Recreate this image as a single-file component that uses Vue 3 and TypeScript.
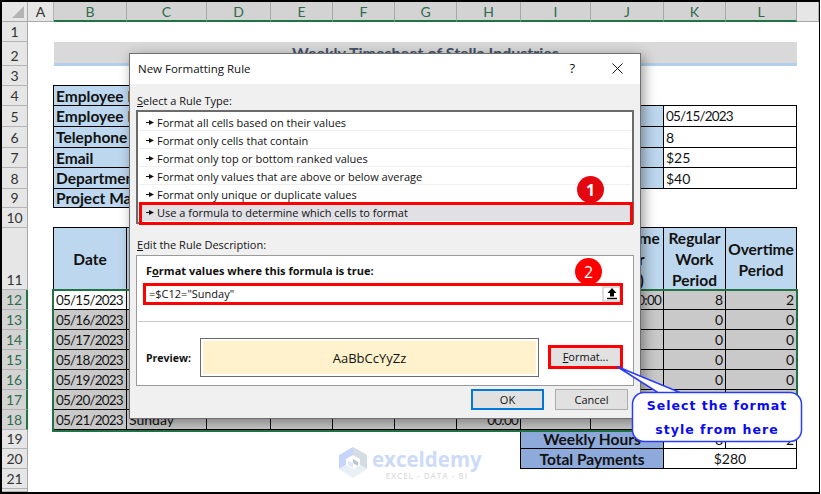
<script setup lang="ts">
interface Cell {
  c: number
  r: number
  cs?: number
  rs?: number
  t?: string
  k?: string
}

const colTracks = [26, 26, 73, 80, 64, 62, 62, 62, 64, 70, 73, 62, 71]
const rowTracks = [20, 20, 24, 20, 20, 21, 21, 20, 21, 19, 20, 62, 20, 20, 20, 20, 20, 20, 20, 19, 20, 20]
const gridStyle = {
  gridTemplateColumns: colTracks.map((n) => n + 'px').join(' ') + ' 1fr',
  gridTemplateRows: rowTracks.map((n) => n + 'px').join(' ') + ' 1fr',
}

const colLetters = ['A', 'B', 'C', 'D', 'E', 'F', 'G', 'H', 'I', 'J', 'K', 'L']
const rowNums = Array.from({ length: 21 }, (_, i) => i + 1)
const at = (c: number, r: number, cs = 1, rs = 1) => ({
  gridColumn: `${c} / span ${cs}`,
  gridRow: `${r} / span ${rs}`,
})

const cells: Cell[] = []
;['Employee Name', 'Employee ID', 'Telephone', 'Email', 'Department', 'Project Manager'].forEach((t, i) => {
  cells.push({ c: 3, r: 5 + i, cs: 3, t, k: 'blue bold' })
})
const infoRows: [string, string, string][] = [
  ['Start Date', '05/15/2023', 'date'],
  ['Regular Hours', '8', ''],
  ['Regular Rate', '$25', ''],
  ['Overtime Rate', '$40', ''],
]
infoRows.forEach(([a, b, k], i) => {
  cells.push({ c: 9, r: 6 + i, cs: 3, t: a, k: 'blue bold' })
  cells.push({ c: 12, r: 6 + i, cs: 2, t: b, k })
})
const heads = ['Date', 'Day', 'Entry', 'Lunch\nStart', 'Lunch\nEnd', 'Exit', 'Work\nHours', 'Regular\nHours', 'Overtime\nHour\n(hrs.)', 'Regular\nWork\nPeriod', 'Overtime\nPeriod']
heads.forEach((t, i) => cells.push({ c: 3 + i, r: 12, t, k: 'blue bold head' }))
const days = ['Monday', 'Tuesday', 'Wednesday', 'Thursday', 'Friday', 'Saturday', 'Sunday']
const dates = ['05/15/2023', '05/16/2023', '05/17/2023', '05/18/2023', '05/19/2023', '05/20/2023', '05/21/2023']
dates.forEach((d, i) => {
  const r = 13 + i
  cells.push({ c: 3, r, t: d, k: i === 0 ? 'date' : 'grey date' })
  cells.push({ c: 4, r, t: days[i], k: i === 0 ? '' : 'grey' })
  for (let c = 5; c <= 8; c++) cells.push({ c, r, k: 'grey' })
  cells.push({ c: 9, r, t: i === 6 ? '00:00' : '', k: 'grey right date' })
  cells.push({ c: 10, r, k: 'grey' })
  cells.push({ c: 11, r, t: i === 0 ? '10:00' : '', k: 'grey right date' })
  cells.push({ c: 12, r, t: i === 0 ? '8' : '0', k: 'grey right' })
  cells.push({ c: 13, r, t: i === 0 ? '2' : '0', k: 'grey right' })
})
cells.push({ c: 10, r: 20, cs: 2, t: 'Weekly Hours', k: 'deep bold center' })
cells.push({ c: 12, r: 20, t: '8', k: 'right' })
cells.push({ c: 13, r: 20, t: '2', k: 'right' })
cells.push({ c: 10, r: 21, cs: 2, t: 'Total Payments', k: 'deep bold center' })
cells.push({ c: 12, r: 21, cs: 2, t: '$280', k: 'center' })

const ruleTypes = [
  'Format all cells based on their values',
  'Format only cells that contain',
  'Format only top or bottom ranked values',
  'Format only values that are above or below average',
  'Format only unique or duplicate values',
  'Use a formula to determine which cells to format',
]
</script>

<template>
  <div class="frame">
    <div class="sheet" :style="gridStyle">
      <div class="corner" :style="at(1, 1)"><span class="tri"></span></div>
      <div
        v-for="(l, i) in colLetters"
        :key="l"
        class="colhead"
        :class="{ on: i > 0 }"
        :style="at(i + 2, 1)"
      >{{ l }}</div>
      <div class="colhead" :style="at(14, 1)"></div>
      <div
        v-for="n in rowNums"
        :key="n"
        class="rowhead"
        :class="{ on: n >= 12 && n <= 18 }"
        :style="at(1, n + 1)"
      >{{ n }}</div>
      <div class="rowhead" :style="at(1, 23)"></div>

      <div class="title" :style="at(3, 3, 11)">Weekly Timesheet of Stella Industries</div>

      <div
        v-for="(cell, i) in cells"
        :key="i"
        class="cell"
        :class="cell.k"
        :style="at(cell.c, cell.r, cell.cs ?? 1, cell.rs ?? 1)"
      >{{ cell.t }}</div>

      <div class="selection" :style="at(3, 13, 11, 7)"></div>
    </div>

    <div class="mark-logo">
      <svg class="cube" width="28" height="31" viewBox="0 0 28 31">
        <path d="M14 0 0 8v14l7-4v-6l7-4z" fill="#c6d5f9" />
        <path d="M14 0l14 8v14l-7-4v-6l-7-4z" fill="#d3dbe3" />
        <path d="M0 22l14 9 14-9-7-4-7 4-7-4z" fill="#e8f0f5" />
        <path d="M14 12l5 3v4l-5-3z" fill="#b9c3cc" />
        <path d="M14 16v5l-5-3v-4z" fill="#dfe8f8" />
      </svg>
      <div class="logo-text">
        <div class="logo-name">exceldemy</div>
        <div class="logo-sub">EXCEL - DATA - BI</div>
      </div>
    </div>

    <section class="dialog">
      <header class="dlg-title">
        <span class="dlg-name">New Formatting Rule</span>
        <span class="dlg-help">?</span>
        <svg class="dlg-close" width="11" height="11" viewBox="0 0 11 11">
          <path d="M.5.5l10 10M10.5.5l-10 10" stroke="#111" stroke-width="1" fill="none" />
        </svg>
      </header>
      <div class="dlg-body">
        <div class="label"><u>S</u>elect a Rule Type:</div>
        <div class="list">
          <div v-for="(r, i) in ruleTypes" :key="r" class="rule" :class="{ sel: i === 5 }">
            <svg class="arrow" width="8" height="7" viewBox="0 0 8 7">
              <path d="M0 3h3V1l5 2.500L3 6V4H0z" fill="#111" />
            </svg>
            <span>{{ r }}</span>
          </div>
        </div>
        <div class="label edit"><u>E</u>dit the Rule Description:</div>
        <div class="desc">
          <div class="strong">F<u>o</u>rmat values where this formula is true:</div>
          <div class="input">
            <span class="formula">=$C12="Sunday"</span>
            <span class="pick">
              <svg width="10" height="12" viewBox="0 0 10 12">
                <path d="M5 0l4.500 5H7v3.500H3V5H.5z" fill="#000" />
                <path d="M0 10.500h10" stroke="#000" stroke-width="1.400" />
              </svg>
            </span>
          </div>
          <div class="sep"></div>
          <div class="preview-row">
            <span class="strong pv">Preview:</span>
            <div class="preview"><div class="sample">AaBbCcYyZz</div></div>
            <div class="btn format"><span><u>F</u>ormat...</span></div>
          </div>
        </div>
        <div class="actions">
          <div class="btn ok">OK</div>
          <div class="btn cancel">Cancel</div>
        </div>
      </div>
      <div class="redbox rb1"></div>
      <div class="redbox rb2"></div>
      <div class="redbox rb3"></div>
      <div class="badge b1">1</div>
      <div class="badge b2">2</div>
    </section>

    <div class="callout">
      <svg class="callout-shape" width="190" height="80" viewBox="0 0 190 80">
        <path
          d="M29 27.500H65 L2 1.500 43 27.500H29a11.500 11.500 0 0 0-11.500 11.500V65a11.500 11.500 0 0 0 11.500 11.500H175a11.500 11.500 0 0 0 11.500-11.500V39a11.500 11.500 0 0 0-11.500-11.500H65"
          fill="#fff"
          stroke="#2b3cf5"
          stroke-width="1.500"
        />
      </svg>
      <div class="callout-text">Select the format<br />style from here</div>
    </div>
  </div>
</template>

<style>
html,
body {
  margin: 0;
  background: #fff;
}
</style>

<style scoped>
.frame {
  position: relative;
  box-sizing: border-box;
  width: 820px;
  height: 494px;
  border-style: solid;
  border-color: #000;
  border-width: 2px 1px 2px 2px;
  background: #fff;
  overflow: hidden;
  font-family: Lato, "Liberation Sans", sans-serif;
  font-size: 14px;
  color: #000;
}
.sheet {
  display: grid;
  width: 100%;
  height: 100%;
}
.corner {
  background: #e6e6e6;
  border-right: 1px solid #a8a8a8;
  border-bottom: 1px solid #a8a8a8;
  box-sizing: border-box;
  display: flex;
  align-items: flex-end;
  justify-content: flex-end;
  padding: 0 3px 3px 0;
}
.tri {
  width: 0;
  height: 0;
  border-left: 12px solid transparent;
  border-bottom: 12px solid #b4b4b4;
}
.colhead {
  box-sizing: border-box;
  display: flex;
  align-items: center;
  justify-content: center;
  background: #e6e6e6;
  border-right: 1px solid #b0b0b0;
  border-bottom: 1px solid #a8a8a8;
  color: #333;
  font-size: 14px;
}
.colhead.on {
  background: #d3d3d3;
  color: #2f6b4c;
  border-right-color: #a8a8a8;
  border-bottom: 2px solid #217346;
}
.rowhead {
  box-sizing: border-box;
  display: flex;
  align-items: flex-end;
  justify-content: center;
  background: #e6e6e6;
  border-right: 1px solid #a8a8a8;
  border-bottom: 1px solid #b4b4b4;
  color: #333;
  font-size: 14px;
  line-height: 19px;
}
.rowhead.on {
  background: #d3d3d3;
  color: #2f6b4c;
  border-right: 2px solid #217346;
}
.title {
  box-sizing: border-box;
  background: #d9d9d9;
  border-bottom: 3px solid #b3cfeb;
  display: flex;
  align-items: center;
  justify-content: center;
  font-weight: 700;
  font-size: 16px;
  color: #44546a;
}
.cell {
  box-sizing: border-box;
  margin: -1px 0 0 -1px;
  border: 1px solid #000;
  padding: 0 2px;
  display: flex;
  align-items: center;
  white-space: nowrap;
  overflow: hidden;
  background: #fff;
  color: #111;
  font-size: 14px;
}
.date {
  font-size: 13.500px;
  letter-spacing: -0.800px;
}
.blue {
  background: #bdd7ee;
}
.deep {
  background: #8eaadb;
}
.grey {
  background: #c9c9c9;
}
.bold {
  font-weight: 700;
  font-size: 15.500px;
}
.right {
  justify-content: flex-end;
}
.center {
  justify-content: center;
}
.head {
  justify-content: center;
  text-align: center;
  white-space: pre-line;
  line-height: 21px;
  padding-top: 2px;
}
.selection {
  box-sizing: border-box;
  margin: -1px -1px -2px -2px;
  border: 2px solid #217346;
  pointer-events: none;
  z-index: 1;
}

.mark-logo {
  position: absolute;
  left: 337px;
  top: 445px;
  display: flex;
  gap: 5px;
  z-index: 2;
}
.logo-name {
  font-family: "Open Sans", sans-serif;
  font-weight: 700;
  font-size: 20.500px;
  line-height: 24px;
  color: #cddbf8;
}
.logo-sub {
  font-family: "Open Sans", sans-serif;
  font-size: 8px;
  line-height: 10px;
  letter-spacing: 1px;
  text-align: center;
  font-weight: 600;
  color: #dedede;
}

.dialog {
  position: absolute;
  left: 127px;
  top: 51px;
  box-sizing: border-box;
  width: 512px;
  height: 366px;
  border: 1px solid #6f6f6f;
  background: #f0f0f0;
  box-shadow: 3px 3px 12px rgba(0, 0, 0, 0.4);
  font-family: "Open Sans", "Noto Sans", sans-serif;
  font-size: 11px;
  color: #111;
  z-index: 3;
}
.dlg-title {
  box-sizing: border-box;
  height: 30px;
  background: #fff;
  display: flex;
  align-items: center;
  padding: 0 17px 2px 8px;
}
.dlg-name {
  flex: 1;
  font-size: 11.500px;
}
.dlg-help {
  font-size: 13px;
  margin-right: 37px;
}
.dlg-body {
  padding: 0 6px;
}
.label {
  margin-top: 9px;
  padding-left: 1px;
  line-height: 16px;
}
.label.edit {
  margin-top: 13px;
}
.list {
  box-sizing: border-box;
  height: 114px;
  margin-top: 1px;
  padding-top: 1px;
  background: #fff;
  border: 2px solid #6b6b6b;
}
.rule {
  box-sizing: border-box;
  height: 18px;
  margin: 0 1px;
  padding: 1px 0 0 7px;
  display: flex;
  align-items: center;
  gap: 3px;
  border-bottom: 1px solid #efefef;
}
.rule.sel {
  background: #e1e0e5;
  border-bottom: 0;
}
.desc {
  box-sizing: border-box;
  height: 131px;
  margin-top: 2px;
  padding-top: 7px;
  background: #fff;
  border: 1px solid #9a9a9a;
}
.strong {
  font-weight: 700;
  line-height: 16px;
  padding-left: 9px;
}
.input {
  display: flex;
  align-items: stretch;
  justify-content: space-between;
  height: 16px;
  margin: 7px 13px 0 9px;
}
.formula {
  padding-left: 3px;
  line-height: 16px;
}
.pick {
  box-sizing: border-box;
  width: 18px;
  border: 2px solid #dcdcdc;
  border-right-width: 1px;
  display: flex;
  align-items: center;
  justify-content: center;
}
.sep {
  height: 1px;
  margin: 19px 1px 0;
  background: #c8c8c8;
}
.preview-row {
  display: flex;
  align-items: center;
  margin-top: 16px;
}
.pv {
  width: 63px;
  box-sizing: border-box;
  font-size: 10.500px;
}
.preview {
  box-sizing: border-box;
  width: 339px;
  height: 39px;
  padding: 2px;
  border: 1px solid #6b6b6b;
}
.sample {
  height: 100%;
  background: #fff2cc;
  display: flex;
  align-items: center;
  justify-content: center;
  font-size: 13px;
}
.btn {
  box-sizing: border-box;
  display: flex;
  align-items: center;
  justify-content: center;
  background: #e1e1e1;
}
.format {
  width: 69px;
  height: 18px;
  margin-left: 12px;
  margin-top: -2px;
}
.actions {
  display: flex;
  justify-content: flex-end;
  gap: 11px;
  margin-top: 3px;
  padding-right: 6px;
}
.ok,
.cancel {
  width: 73px;
  height: 21px;
}
.ok {
  border: 2px solid #0078d7;
}
.cancel {
  border: 1px solid #adadad;
}
.redbox {
  position: absolute;
  box-sizing: border-box;
  border: 3px solid #f00;
}
.rb1 {
  left: 9px;
  top: 148px;
  width: 494px;
  height: 23px;
}
.rb2 {
  left: 13px;
  top: 229px;
  width: 480px;
  height: 22px;
}
.rb3 {
  left: 418px;
  top: 291px;
  width: 75px;
  height: 24px;
}
.badge {
  position: absolute;
  width: 27px;
  height: 27px;
  border-radius: 50%;
  background: #f00;
  color: #fff;
  display: flex;
  align-items: center;
  justify-content: center;
  font-size: 16px;
}
.b1 {
  left: 447px;
  top: 122px;
  background: #e3080f;
  font-weight: 700;
}
.b2 {
  left: 445px;
  top: 204px;
}

.callout {
  position: absolute;
  left: 613px;
  top: 363px;
  width: 190px;
  height: 80px;
  z-index: 4;
}
.callout-shape {
  position: absolute;
  left: 0;
  top: 0;
}
.callout-text {
  position: absolute;
  left: 17px;
  top: 28px;
  width: 170px;
  height: 50px;
  display: flex;
  align-items: center;
  justify-content: center;
  text-align: center;
  font-family: "DejaVu Sans", sans-serif;
  font-weight: 700;
  font-size: 12.500px;
  letter-spacing: 1px;
  line-height: 24px;
  color: #0a0af0;
}
</style>
